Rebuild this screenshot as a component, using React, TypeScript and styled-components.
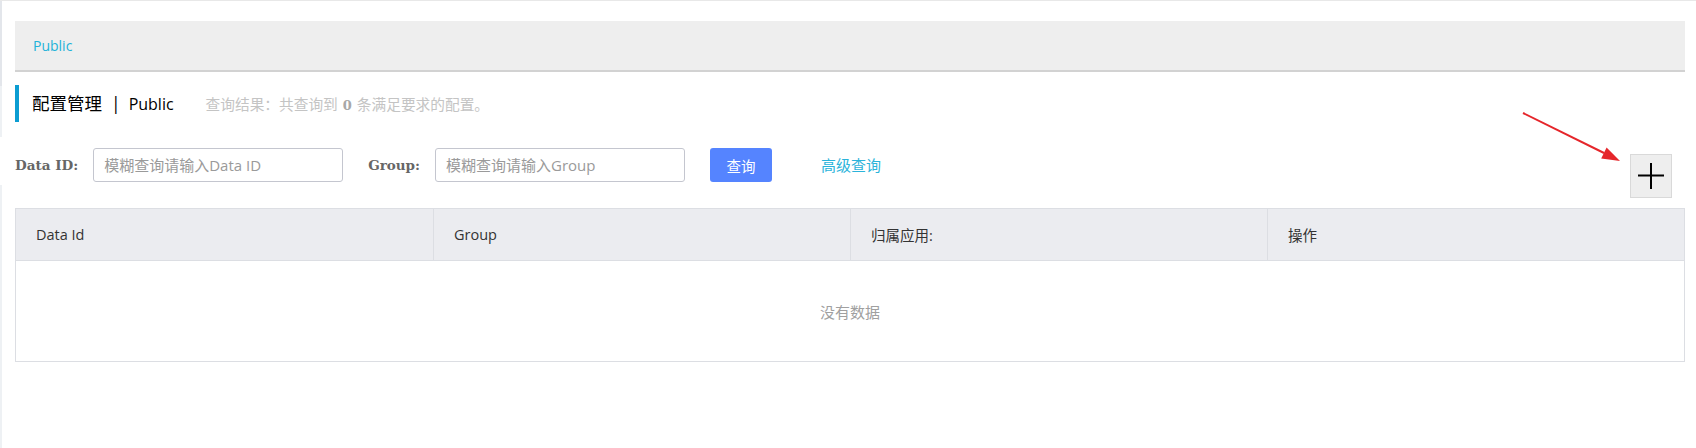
import styled, { createGlobalStyle } from 'styled-components';

const GlobalStyle = createGlobalStyle`
  html, body {
    margin: 0;
    padding: 0;
    background: #ffffff;
  }

  body {
    font-family: "Open Sans", "Noto Sans CJK SC", sans-serif;
    font-size: 14px;
    color: #333333;
  }
`

const Page = styled.div`
  position: relative;
  display: flex;
  min-height: 447px;
  border-top: 1px solid #e8e8e8;
`

const SideEdge = styled.div`
  display: flex;
  flex-direction: column;
  width: 2px;
  flex-shrink: 0;
`

const EdgePiece = styled.div<{ $h: number; $color: string }>`
  height: ${p => p.$h}px;
  background: ${p => p.$color};
`

const Main = styled.div`
  flex: 1;
  padding: 20px 11px 0 13px;
`

const Breadcrumb = styled.div`
  display: flex;
  align-items: center;
  height: 49px;
  padding-left: 18px;
  background: #eeeeee;
  border-bottom: 2px solid #d2d2d2;
`

const Crumb = styled.span`
  color: #22b2d9;
  font-size: 14px;
`

const TitleRow = styled.div`
  display: flex;
  align-items: center;
  height: 37px;
  margin-top: 13px;
  padding-left: 13px;
  border-left: 4px solid #0c9dd2;
`

const TitleText = styled.h1`
  margin: 0;
  font-size: 17.5px;
  font-weight: normal;
  color: #000000;
  line-height: 24px;
`

const TitleLatin = styled.span`
  font-size: 16px;
`

const Sep = styled.span`
  margin: 0 8px 0 9px;
`

const Summary = styled.span`
  margin-left: 32px;
  font-size: 14.7px;
  color: #c4c4c4;

  b {
    font-family: "DejaVu Serif", serif;
    font-size: 13px;
    color: #a8a8a8;
    margin: 0 5px;
  }
`

const SearchRow = styled.div`
  display: flex;
  align-items: flex-start;
  margin-top: 26px;
`

const Field = styled.div<{ $gap?: number }>`
  display: flex;
  align-items: center;
  height: 34px;
  margin-left: ${p => p.$gap ?? 0}px;
`

const Label = styled.label`
  font-family: "DejaVu Serif", serif;
  font-weight: bold;
  font-size: 13.5px;
  color: #666666;
  margin-right: 15px;
`

const Input = styled.input`
  box-sizing: border-box;
  width: 250px;
  height: 34px;
  padding: 0 10px;
  border: 1px solid #c4c6cf;
  border-radius: 3px;
  font-family: "Open Sans", "Noto Sans CJK SC", sans-serif;
  font-size: 15px;
  outline: none;

  &::placeholder {
    color: #9a9a9a;
  }
`

const QueryButton = styled.button`
  width: 62px;
  height: 34px;
  margin-left: 25px;
  border: none;
  border-radius: 3px;
  background: #5584ff;
  color: #ffffff;
  font-family: "Open Sans", "Noto Sans CJK SC", sans-serif;
  font-size: 14.5px;
`

const AdvancedLink = styled.a`
  margin-left: 49px;
  line-height: 34px;
  font-size: 15px;
  color: #2bb3da;
  text-decoration: none;
`

const AddButton = styled.button`
  display: flex;
  align-items: center;
  justify-content: center;
  box-sizing: border-box;
  width: 42px;
  height: 44px;
  margin: 6px 13px 0 auto;
  padding: 0;
  background: #eeeeee;
  border: 1px solid #d9d9d9;
`

const Table = styled.div`
  margin-top: 10px;
  border: 1px solid #dcdee3;
`

const HeaderRow = styled.div`
  display: grid;
  grid-template-columns: repeat(4, 1fr);
  height: 51px;
  background: #ebecf0;
  border-bottom: 1px solid #dcdee3;
`

const HeaderCell = styled.div`
  display: flex;
  align-items: center;
  padding-left: 20px;
  color: #333333;
  font-size: 14.5px;

  & + & {
    border-left: 1px solid #dcdee3;
  }
`

const EmptyBody = styled.div`
  display: flex;
  align-items: center;
  justify-content: center;
  height: 100px;
  color: #a0a0a0;
  font-size: 15px;
`

const Annotation = styled.svg`
  position: absolute;
  left: 1510px;
  top: 104px;
  pointer-events: none;
`

const columns = ['Data Id', 'Group', '归属应用:', '操作'];

const App = () => {
  return (
    <Page>
      <GlobalStyle />
      <SideEdge>
        <EdgePiece $h={85} $color="#e3e6eb" />
        <EdgePiece $h={51} $color="#eef1f4" />
        <EdgePiece $h={48} $color="transparent" />
        <EdgePiece $h={263} $color="#eef1f4" />
      </SideEdge>
      <Main>
        <Breadcrumb>
          <Crumb>Public</Crumb>
        </Breadcrumb>

        <TitleRow>
          <TitleText>配置管理<Sep>|</Sep><TitleLatin>Public</TitleLatin></TitleText>
          <Summary>查询结果：共查询到<b>0</b>条满足要求的配置。</Summary>
        </TitleRow>

        <SearchRow>
          <Field>
            <Label>Data ID:</Label>
            <Input placeholder="模糊查询请输入Data ID" />
          </Field>
          <Field $gap={25}>
            <Label>Group:</Label>
            <Input placeholder="模糊查询请输入Group" />
          </Field>
          <QueryButton>查询</QueryButton>
          <AdvancedLink>高级查询</AdvancedLink>
          <AddButton aria-label="add">
            <svg width="26" height="26" viewBox="0 0 26 26">
              <line x1="0" y1="12.5" x2="26" y2="12.5" stroke="#000" strokeWidth="2" />
              <line x1="13" y1="0" x2="13" y2="26" stroke="#000" strokeWidth="2" />
            </svg>
          </AddButton>
        </SearchRow>

        <Table>
          <HeaderRow>
            {columns.map(c => (
              <HeaderCell key={c}>{c}</HeaderCell>
            ))}
          </HeaderRow>
          <EmptyBody>没有数据</EmptyBody>
        </Table>
      </Main>

      {/* red arrow pointing at the add button */}
      <Annotation width="120" height="70" viewBox="0 0 120 70">
        <line x1="13" y1="8" x2="94" y2="48" stroke="#e5262b" strokeWidth="2" />
        <polygon points="110,56 91.2,53.4 96.6,42.6" fill="#e5262b" />
      </Annotation>
    </Page>
  );
};

export default App;
